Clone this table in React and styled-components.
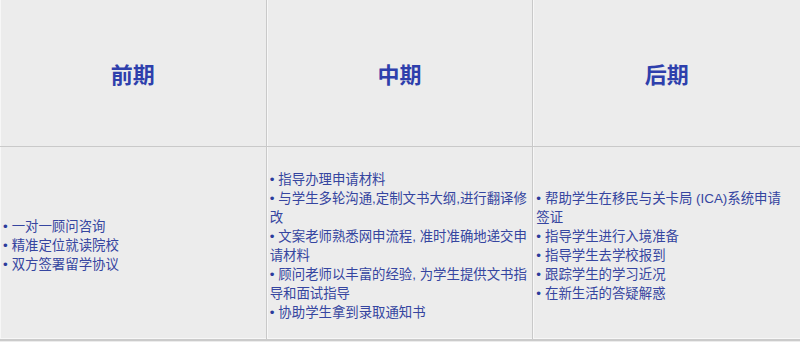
import React from "react";
import styled, { createGlobalStyle } from "styled-components";

const GlobalStyle = createGlobalStyle`
  html, body {
    margin: 0;
    padding: 0;
    background: #ececec;
  }
  body {
    font-family: "Liberation Sans", "Noto Sans CJK SC", sans-serif;
  }
`;

const Table = styled.table`
  width: 800px;
  border-collapse: separate;
  border-spacing: 0;
  table-layout: fixed;
  background: #ececec;
  border-bottom: 2px solid #cbcbcb;
`;

const HeadCell = styled.th`
  height: 146px;
  padding: 0;
  border-bottom: 1px solid #c9c9c9;
  border-right: ${(p) => (p.$last ? "none" : "1px solid #c9c9c9")};
  box-shadow: inset 1px 0 0 #f7f7f7;
  text-align: center;
  vertical-align: middle;
  font-size: 22px;
  font-weight: 700;
  color: #2e3fac;
`;

const BodyCell = styled.td`
  height: 187px;
  padding: 5px ${(p) => (p.$last ? "10px" : "3px")} 0 3px;
  border-right: ${(p) => (p.$last ? "none" : "1px solid #c9c9c9")};
  box-shadow: inset 1px 0 0 #f7f7f7, inset 0 -1px 0 #f7f7f7;
  vertical-align: middle;
`;

const List = styled.ul`
  list-style: none;
  margin: 0;
  padding: 0;
`;

const Item = styled.li`
  font-size: 13.4px;
  line-height: 19px;
  color: #3545a0;

  &::before {
    content: "•";
    color: #2b3b9c;
    margin-right: 4px;
  }
`;

const columns = [
  {
    title: "前期",
    items: ["一对一顾问咨询", "精准定位就读院校", "双方签署留学协议"],
  },
  {
    title: "中期",
    items: [
      "指导办理申请材料",
      "与学生多轮沟通,定制文书大纲,进行翻译修改",
      "文案老师熟悉网申流程, 准时准确地递交申请材料",
      "顾问老师以丰富的经验, 为学生提供文书指导和面试指导",
      "协助学生拿到录取通知书",
    ],
  },
  {
    title: "后期",
    items: [
      "帮助学生在移民与关卡局 (ICA)系统申请签证",
      "指导学生进行入境准备",
      "指导学生去学校报到",
      "跟踪学生的学习近况",
      "在新生活的答疑解惑",
    ],
  },
];

export default function App() {
  return (
    <>
      <GlobalStyle />
      <Table>
        <tbody>
          <tr>
            {columns.map((c, i) => (
              <HeadCell key={c.title} $last={i === columns.length - 1}>
                {c.title}
              </HeadCell>
            ))}
          </tr>
          <tr>
            {columns.map((c, i) => (
              <BodyCell key={c.title} $last={i === columns.length - 1}>
                <List>
                  {c.items.map((t) => (
                    <Item key={t}>{t}</Item>
                  ))}
                </List>
              </BodyCell>
            ))}
          </tr>
        </tbody>
      </Table>
    </>
  );
}
